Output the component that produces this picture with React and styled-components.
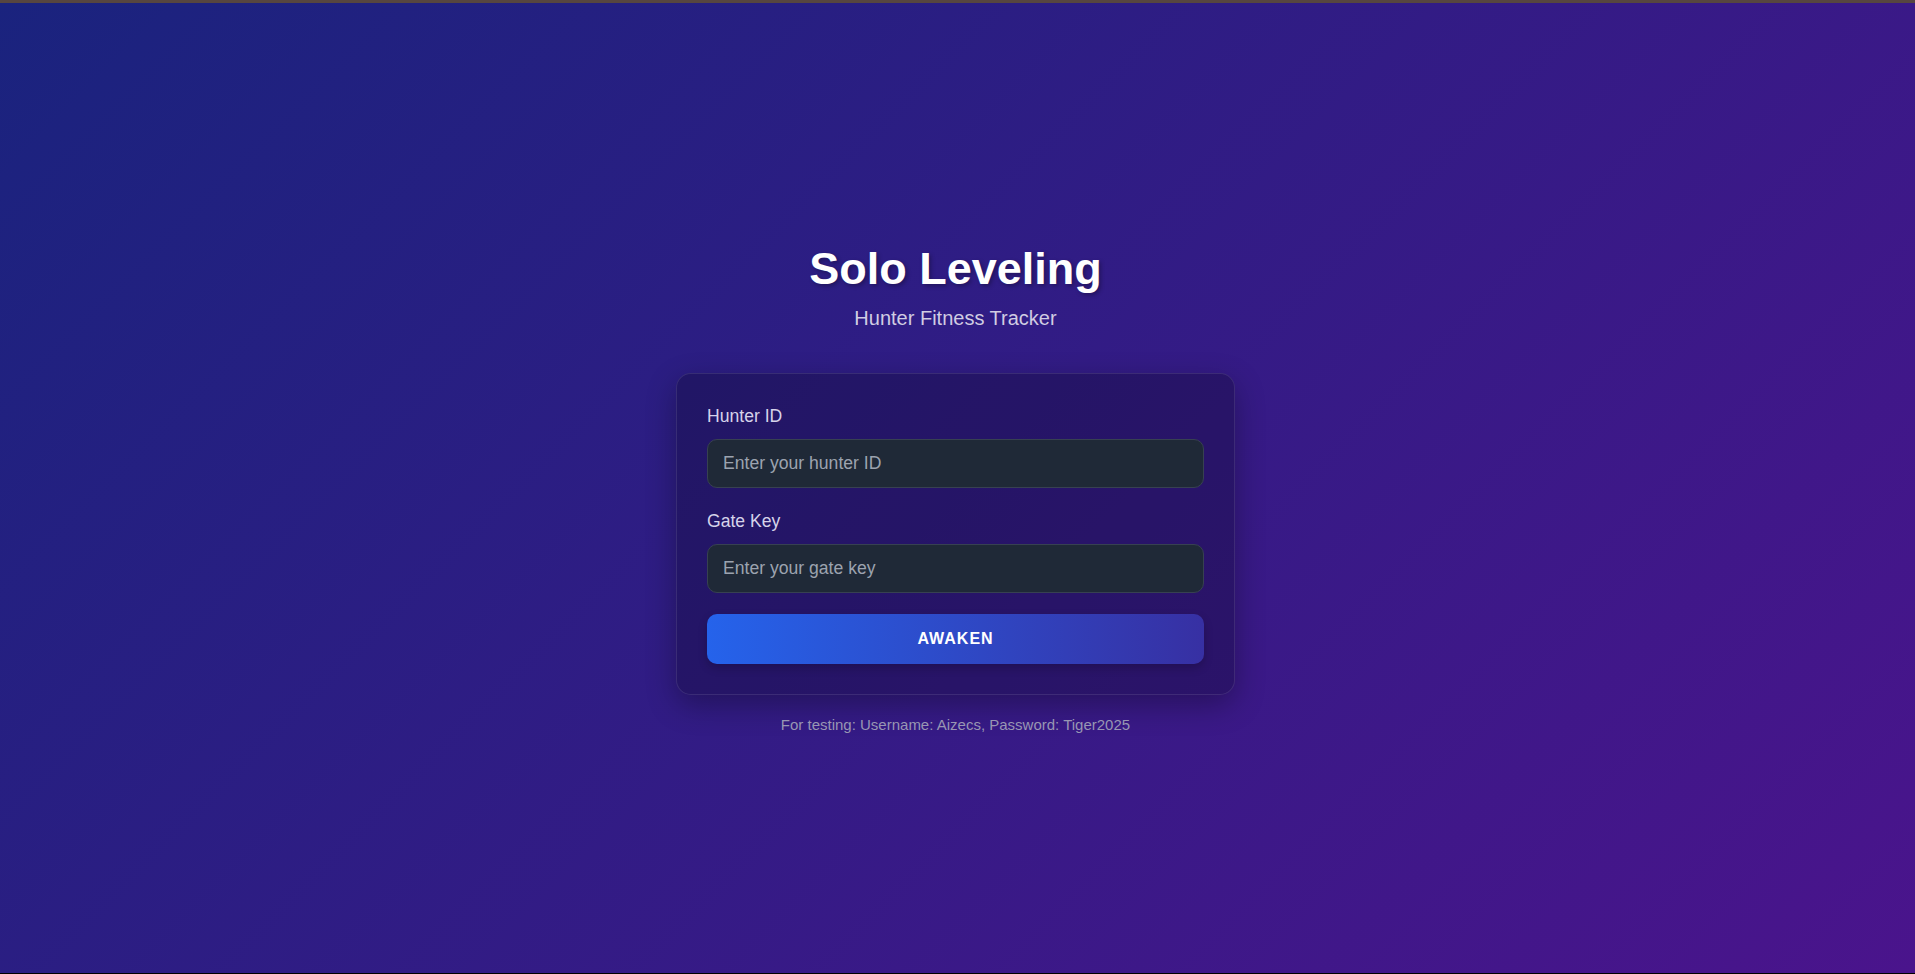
import React from "react";
import styled, { createGlobalStyle } from "styled-components";

const GlobalStyle = createGlobalStyle`
  html, body {
    margin: 0;
    padding: 0;
  }
  body {
    font-family: "Liberation Sans", Arial, Helvetica, sans-serif;
  }
  * { box-sizing: border-box; }
`;

const Page = styled.main`
  position: relative;
  min-height: 100vh;
  display: flex;
  flex-direction: column;
  align-items: center;
  justify-content: center;
  padding-right: 4px;
  background: linear-gradient(135deg, #1a237e 0%, #4a148c 100%);
  border-bottom: 1px solid #000;

  &::before {
    content: "";
    position: absolute;
    top: 0;
    left: 0;
    right: 0;
    height: 3px;
    background: #574640;
  }
`;

const Header = styled.header`
  display: flex;
  flex-direction: column;
  align-items: center;
  margin-bottom: 43px;
`;

const Title = styled.h1`
  margin: 0 0 7px;
  font-size: 45px;
  line-height: 62px;
  font-weight: 700;
  color: #ffffff;
  text-shadow: 2px 2px 4px rgba(0, 0, 0, 0.3);
`;

const Subtitle = styled.p`
  margin: 0;
  font-size: 20px;
  line-height: 23px;
  color: rgba(255, 255, 255, 0.78);
`;

const Card = styled.form`
  width: 559px;
  padding: 30px 30px 30px;
  border: 1px solid rgba(255, 255, 255, 0.1);
  border-radius: 15px;
  background: rgba(10, 8, 35, 0.3);
  box-shadow: 0 10px 30px rgba(0, 0, 0, 0.3);
`;

const Field = styled.div`
  display: flex;
  flex-direction: column;
  margin-bottom: 21px;
`;

const Label = styled.label`
  font-size: 17.6px;
  line-height: 24px;
  margin-bottom: 11px;
  color: #d6d3ea;
`;

const Input = styled.input`
  width: 100%;
  height: 49px;
  padding: 0 15px;
  background: #1f2937;
  border: 1px solid #374151;
  border-radius: 10px;
  font-family: inherit;
  font-size: 17.6px;
  color: #ffffff;
  outline: none;

  &::placeholder {
    color: #9ca3af;
  }
`;

const Button = styled.button`
  width: 100%;
  height: 50px;
  border: none;
  border-radius: 10px;
  background: linear-gradient(90deg, #2563eb 0%, #3730a3 100%);
  color: #ffffff;
  font-family: inherit;
  font-size: 16px;
  font-weight: 700;
  letter-spacing: 1px;
  cursor: pointer;
  box-shadow: 0 4px 10px rgba(0, 0, 0, 0.2);
`;

const Hint = styled.p`
  margin: 19px 0 0;
  font-size: 15px;
  line-height: 21px;
  color: #9896b3;
`;

export default function App() {
  return (
    <>
      <GlobalStyle />
      <Page>
        <Header>
          <Title>Solo Leveling</Title>
          <Subtitle>Hunter Fitness Tracker</Subtitle>
        </Header>
        <Card onSubmit={(e) => e.preventDefault()}>
          <Field>
            <Label htmlFor="hunter-id">Hunter ID</Label>
            <Input id="hunter-id" type="text" placeholder="Enter your hunter ID" />
          </Field>
          <Field>
            <Label htmlFor="gate-key">Gate Key</Label>
            <Input id="gate-key" type="password" placeholder="Enter your gate key" />
          </Field>
          <Button type="submit">AWAKEN</Button>
        </Card>
        <Hint>For testing: Username: Aizecs, Password: Tiger2025</Hint>
      </Page>
    </>
  );
}
